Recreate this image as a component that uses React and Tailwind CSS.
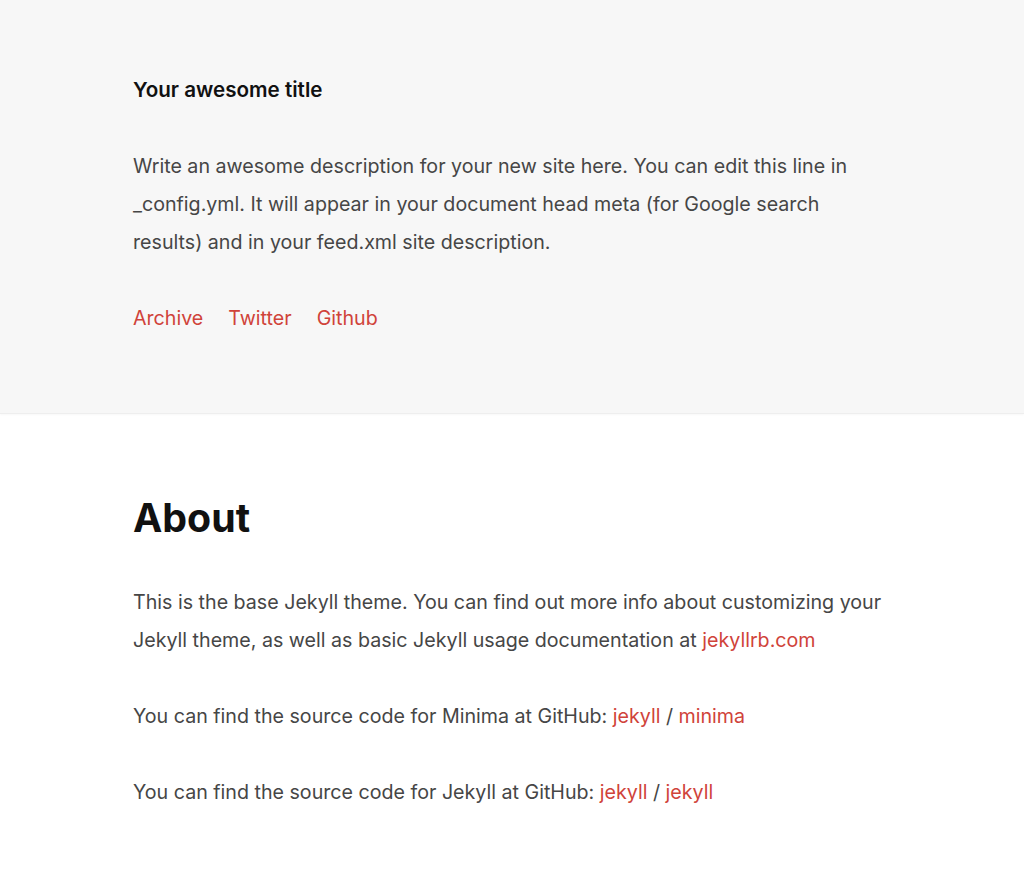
export default function App() {
  const link = "text-[#d0433a]";
  return (
    <div className="min-h-[872px] bg-white text-[#464646] font-['Inter','Noto_Sans',sans-serif] text-[19.65px] leading-[38px]">
      <header className="bg-[#f7f7f7] border-b border-[#eeeeee] shadow-[0_1px_2px_rgba(0,0,0,0.03)]">
        <div className="mx-[133px] pt-[71px] pb-[76px]">
          <h1 className="text-[20.6px] font-semibold text-[#111] leading-[38px]">Your awesome title</h1>
          <p className="mt-[38px]">
            Write an awesome description for your new site here. You can edit this line in _config.yml. It will appear in your document head meta (for Google search results) and in your feed.xml site description.
          </p>
          <nav className="mt-[38px] flex gap-[25px]">
            <a className={link}>Archive</a>
            <a className={link}>Twitter</a>
            <a className={link}>Github</a>
          </nav>
        </div>
      </header>
      <main className="mx-[133px] pt-[80px] pb-[40px]">
        <h2 className="text-[39.3px] font-bold text-[#111] leading-[48px]">About</h2>
        <p className="mt-[41px]">
          This is the base Jekyll theme. You can find out more info about customizing your Jekyll theme, as well as basic Jekyll usage documentation at <a className={link}>jekyllrb.com</a>
        </p>
        <p className="mt-[38px]">
          You can find the source code for Minima at GitHub: <a className={link}>jekyll</a> / <a className={link}>minima</a>
        </p>
        <p className="mt-[38px]">
          You can find the source code for Jekyll at GitHub: <a className={link}>jekyll</a> / <a className={link}>jekyll</a>
        </p>
      </main>
    </div>
  );
}
